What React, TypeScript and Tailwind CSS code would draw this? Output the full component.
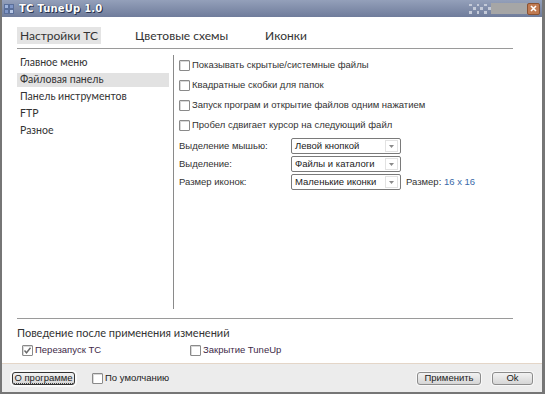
import React from 'react';

const NAV = ['Главное меню', 'Файловая панель', 'Панель инструментов', 'FTP', 'Разное'];
const OPTIONS = [
  'Показывать скрытые/системные файлы',
  'Квадратные скобки для папок',
  'Запуск програм и открытие файлов одним нажатием',
  'Пробел сдвигает курсор на следующий файл',
];

const gothic = { fontFamily: '"Lato", "Open Sans", sans-serif' };

function Box({ checked = false }: { checked?: boolean }) {
  return (
    <span className="w-[11px] h-[11px] border border-[#8a8a8a] bg-white rounded-[1px] flex items-center justify-center shrink-0 shadow-[inset_1px_1px_0_#d8d8d8]">
      {checked && (
        <svg width="9" height="9" viewBox="0 0 9 9">
          <path d="M1.5 4.5 L3.5 6.8 L7.5 1.8" stroke="#6a6a6a" strokeWidth="1.4" fill="none" />
        </svg>
      )}
    </span>
  );
}

function Select({ value }: { value: string }) {
  return (
    <div className="w-[110px] h-[16px] border border-[#7a7a7a] rounded-[2px] bg-white flex items-center">
      <span className="flex-1 pl-[3px] text-[9.5px] text-[#222] whitespace-nowrap">{value}</span>
      <span className="w-[13px] h-[12px] mr-[2px] border border-[#e2e2e2] flex items-center justify-center">
        <svg width="5" height="3" viewBox="0 0 5 3"><path d="M0 0 H5 L2.5 3 Z" fill="#8a8a8a" /></svg>
      </span>
    </div>
  );
}

function Btn({ children, focused = false, w }: { children: React.ReactNode; focused?: boolean; w: string }) {
  return (
    <button
      className={
        'h-[13px] rounded-[3px] text-[9.5px] leading-none whitespace-nowrap text-[#222] bg-gradient-to-b from-[#f2f2f2] to-[#d6d6d6] flex items-center justify-center ' +
        w +
        (focused ? ' border border-[#333] shadow-[0_0_0_2px_#fafafa]' : ' border border-[#8c8c8c] shadow-[0_0_0_1px_#f8f8f8]')
      }
    >
      <span className={focused ? 'border-b border-dotted border-[#444] leading-[10px]' : ''}>{children}</span>
    </button>
  );
}

export default function App() {
  return (
    <div
      className="w-[545px] h-[394px] flex flex-col bg-white border-l-2 border-r-[3px] border-b-2 border-[#767676] overflow-hidden"
      style={{ fontFamily: '"Liberation Sans", Arial, sans-serif' }}
    >
      {/* title bar */}
      <div className="h-[17px] shrink-0 bg-gradient-to-b from-[#94a0ba] to-[#6f7c9b] flex items-center pl-[2px] pr-[2px]">
        <svg width="10" height="10" viewBox="0 0 10 10" className="mr-[5px]">
          <rect x="0" y="0" width="10" height="10" fill="#5a6f9a" />
          <rect x="1" y="1" width="3" height="3" fill="#9fb4dc" />
          <rect x="6" y="1" width="3" height="3" fill="#7f96c8" />
          <rect x="1" y="6" width="3" height="3" fill="#7f96c8" />
          <rect x="6" y="6" width="3" height="3" fill="#b8c8e6" />
        </svg>
        <span
          className="text-[10px] font-bold text-white tracking-[0.2px]"
          style={{ fontFamily: '"DejaVu Sans", sans-serif', textShadow: '0 0 1px #1e2840, 1px 1px 0 #2a3450' }}
        >
          TC TuneUp 1.0
        </span>
        <div className="flex-1" />
        <div className="w-[22px] h-[10px] grid grid-cols-6 gap-[1px]">
          {Array.from({ length: 18 }).map((_, i) => (
            <span key={i} className={(i + Math.floor(i / 6)) % 2 === 0 ? 'bg-[#c4cad8]' : 'bg-transparent'} />
          ))}
        </div>
        <div className="w-[36px] h-[11px] bg-[#a6a6a6]" />
        <div className="w-[13px] h-[12px] rounded-[2px] bg-[#c07a52] border border-[#8a5232] flex items-center justify-center">
          <svg width="7" height="7" viewBox="0 0 7 7">
            <path d="M1 1 L6 6 M6 1 L1 6" stroke="#fff" strokeWidth="1.6" />
          </svg>
        </div>
      </div>

      {/* main */}
      <div className="flex-1 flex flex-col px-[15px] text-[#333]">
        <div className="flex items-center h-[31px] pt-[7px] pb-[1px] text-[12px]" style={gothic}>
          <span className="bg-[#e4e4e4] px-[3px] h-[17px] flex items-center">Настройки TC</span>
          <span className="ml-[34px]">Цветовые схемы</span>
          <span className="ml-[37px]">Иконки</span>
        </div>
        <div className="h-px bg-[#9a9a9a] mr-[14px]" />

        <div className="flex h-[269px]">
          <div className="w-[152px] pt-[5px] text-[10.5px]" style={gothic}>
            {NAV.map((n) => (
              <div key={n} className="h-[17px] flex items-center">
                <div className={'w-full h-[14px] flex items-center pl-[3px] ' + (n === 'Файловая панель' ? 'bg-[#e2e2e2]' : '')}>
                  {n}
                </div>
              </div>
            ))}
          </div>
          <div className="ml-[4px] mt-[6px] w-px h-[254px] bg-[#8a8a8a]" />
          <div className="pl-[5px] pt-[11px] flex flex-col text-[9.5px]">
            <div className="flex flex-col gap-[9px]">
              {OPTIONS.map((o) => (
                <div key={o} className="flex items-center gap-[2px] h-[11px]">
                  <Box />
                  <span>{o}</span>
                </div>
              ))}
            </div>
            <div className="flex flex-col gap-[2px] mt-[7px]">
              {[
                ['Выделение мышью:', 'Левой кнопкой'],
                ['Выделение:', 'Файлы и каталоги'],
                ['Размер иконок:', 'Маленькие иконки'],
              ].map(([l, v], i) => (
                <div key={l} className="flex items-center h-[16px]">
                  <span className="w-[112px]">{l}</span>
                  <Select value={v} />
                  {i === 2 && (
                    <span className="ml-[5px]">
                      Размер: <span className="text-[#3a6aa8]">16 x 16</span>
                    </span>
                  )}
                </div>
              ))}
            </div>
          </div>
        </div>

        <div className="h-px bg-[#9a9a9a] mr-[14px]" />
        <div className="mt-[6px] text-[11px]" style={gothic}>Поведение после применения изменений</div>
        <div className="flex items-center mt-[2px] text-[9.5px] h-[13px] pl-[5px]">
          <div className="flex items-center gap-[2px] w-[168px]">
            <Box checked />
            <span className="text-[#3e2a48]">Перезапуск TC</span>
          </div>
          <div className="flex items-center gap-[2px]">
            <Box />
            <span className="text-[#3e2a48]">Закрытие TuneUp</span>
          </div>
        </div>
      </div>

      {/* bottom bar */}
      <div className="h-[29px] shrink-0 border-t border-[#e4d6c8] bg-[#ececec] flex items-center pl-[10px] pr-[9px] text-[9.5px] text-[#222]">
        <Btn focused w="w-[63px]">О программе</Btn>
        <div className="flex items-center gap-[2px] ml-[17px]">
          <Box />
          <span>По умолчанию</span>
        </div>
        <div className="flex-1" />
        <Btn w="w-[64px]">Применить</Btn>
        <div className="w-[11px]" />
        <Btn w="w-[41px]">Ok</Btn>
      </div>
    </div>
  );
}
